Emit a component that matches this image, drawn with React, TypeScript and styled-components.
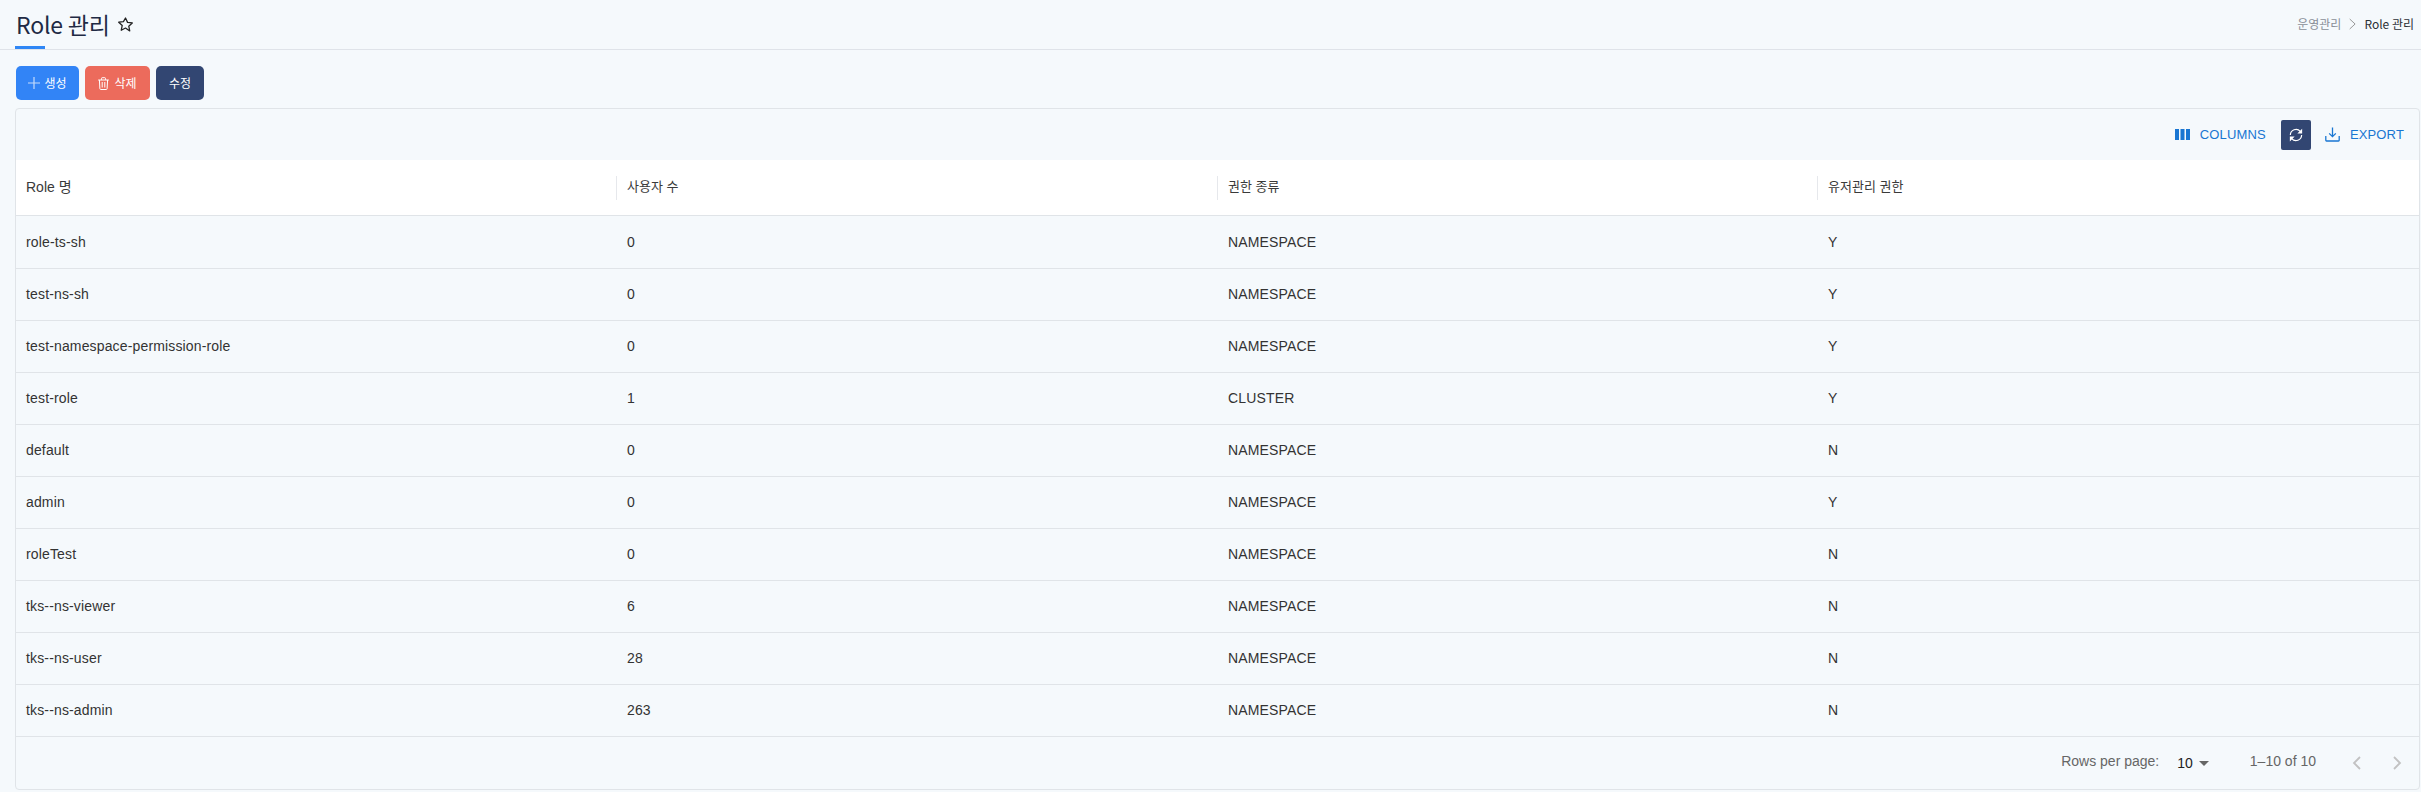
import React from "react";
import styled, { createGlobalStyle } from "styled-components";

const Global = createGlobalStyle`
  html, body { margin: 0; padding: 0; background: #f5f9fc; }
  body { font-family: "Liberation Sans", "Noto Sans CJK KR", sans-serif; }
  * { box-sizing: border-box; }
`;
const Page = styled.div`width: 2421px; height: 792px; overflow: hidden; background: #f5f9fc;`;
const Header = styled.header`
  height: 50px; border-bottom: 1px solid #dfe3e9; display: flex; align-items: flex-start;
  justify-content: space-between; padding: 0 2px 0 16px;
`;
const TitleWrap = styled.div`
  position: relative; height: 49px; display: flex; align-items: center; gap: 7px; padding-bottom: 1px;
  &::after { content: ""; position: absolute; left: -1px; bottom: 0; width: 30px; height: 3px; background: #2e86f5; }
`;
const Title = styled.h1`
  margin: 0; font: 400 23px/32px "Noto Sans CJK KR", sans-serif; color: #1f2a44; letter-spacing: -0.2px;
`;
const Crumbs = styled.nav`
  height: 48px; display: flex; align-items: center; gap: 8px; padding-right: 5px;
  font: 400 12px/16px "Noto Sans CJK KR", sans-serif;
`;
const Crumb = styled.span<{ $active?: boolean }>`color: ${p => (p.$active ? "#2b2f36" : "#8a8f98")};`;
const Actions = styled.div`display: flex; gap: 6px; padding: 16px 0 8px 16px;`;
const Btn = styled.button<{ $bg: string; $w: number; $gap?: number }>`
  width: ${p => p.$w}px; height: 34px; border: 0; border-radius: 5px; background: ${p => p.$bg}; color: #fff;
  font: 400 12px/16px "Noto Sans CJK KR", sans-serif; display: flex; align-items: center; justify-content: center; gap: ${p => p.$gap ?? 4}px; padding: 0;
`;
const Card = styled.section`
  margin-left: 15px; width: 2405px; height: 682px; border: 1px solid #e0e4e8; border-radius: 4px; display: flex; flex-direction: column; overflow: hidden;
`;
const Toolbar = styled.div`
  height: 51px; flex: none; display: flex; align-items: center; justify-content: flex-end; padding: 0 15px 0 0;
`;
const ToolText = styled.button`
  border: 0; background: none; color: #1976d2; font: 400 13px/16px "Liberation Sans", sans-serif; letter-spacing: 0.15px;
  display: flex; align-items: center; gap: 10px; padding: 0;
`;
const Refresh = styled.button`
  width: 30px; height: 30px; border: 0; border-radius: 2px; background: #324672; margin: 0 14px 0 15px; padding: 0;
  display: flex; align-items: center; justify-content: center;
`;
const Grid = styled.div`display: grid; grid-template-columns: 600px 601px 600px 1fr; align-items: center;`;
const HeadRow = styled(Grid)`height: 56px; margin-bottom: 1px; background: #fff; border-bottom: 1px solid #e0e4e8; flex: none;`;
const HeadCell = styled.div<{ $sep?: boolean }>`
  height: 24px; display: flex; align-items: center; padding: 0 0 2px 10px;
  font: 400 ${p => (p.$sep ? "13px" : "14px")}/16px "Liberation Sans", "Noto Sans CJK KR", sans-serif; color: #3a3a3a;
  border-left: ${p => (p.$sep ? "1px solid #e6e8ec" : "0")};
`;
const Row = styled(Grid)`height: 52px; flex: none; border-bottom: 1px solid #e0e4e8;`;
const Cell = styled.div<{ $first?: boolean }>`
  padding: 0 0 2px ${p => (p.$first ? "10px" : "11px")};
  font: 400 14px/18px "Liberation Sans", sans-serif; letter-spacing: 0.15px; color: #333;
`;
const Footer = styled.footer`
  flex: 1; display: flex; align-items: center; justify-content: flex-end; padding-right: 10px; font: 400 14px/20px "Liberation Sans", sans-serif; color: #666;
`;
const FootText = styled.span`position: relative; top: -2px;`;
const PerPage = styled.span`display: flex; align-items: center; gap: 6px; margin: 0 41px 0 18px; color: #222;`;
const Pager = styled.span`display: flex; gap: 16px; margin-left: 29px;`;

const Star = () => (
  <svg width="17" height="17" viewBox="0 0 24 24" fill="none" stroke="#222" strokeWidth="1.8" strokeLinejoin="round">
    <path d="M12 2.8l2.9 6.2 6.7.8-5 4.6 1.4 6.7L12 17l-6 3.1 1.4-6.7-5-4.6 6.7-.8z" />
  </svg>
);
const Plus = () => (
  <svg width="12" height="12" viewBox="0 0 12 12" stroke="#c5dbfb" strokeWidth="1.2"><path d="M6 0v12M0 6h12" /></svg>
);
const Trash = () => (
  <svg width="11" height="13" viewBox="0 0 11 13" fill="none" stroke="#fff" strokeWidth="1">
    <path d="M.2 3h10.6M1.4 3l.5 8.8c0 .4.4.7.8.7h5.6c.4 0 .8-.3.8-.7L9.6 3M3.5 2.8V1.4c0-.4.3-.7.7-.7h2.6c.4 0 .7.3.7.7v1.4M4.2 5v5.5M6.8 5v5.5" />
  </svg>
);
const ColumnsIcon = () => (
  <svg width="15" height="11" viewBox="0 0 15 11" fill="#1976d2"><rect width="4" height="11" /><rect x="5.5" width="4" height="11" /><rect x="11" width="4" height="11" /></svg>
);
const Sync = () => (
  <svg width="18" height="18" viewBox="0 0 24 24">
    <path d="M4.5 12a7.5 7.5 0 0 1 13.2-4.8M19.5 12a7.5 7.5 0 0 1-13.2 4.8" fill="none" stroke="#fff" strokeWidth="1.6" />
    <path d="M20.2 3.5v6.4h-6.4zM3.8 20.5v-6.4h6.4z" fill="#fff" />
  </svg>
);
const Download = () => (
  <svg width="15" height="15" viewBox="0 0 15 15" fill="none" stroke="#1976d2" strokeWidth="1.3">
    <path d="M7.5 .5v9M4.2 6.4l3.3 3.3 3.3-3.3M.8 9v4.3c0 .4.3.7.7.7h12c.4 0 .7-.3.7-.7V9" />
  </svg>
);
const Caret = () => (
  <svg width="10" height="5" viewBox="0 0 10 5" fill="#666"><path d="M0 0h10L5 5z" /></svg>
);
const Chev = ({ d }: { d: string }) => (
  <svg width="24" height="24" viewBox="0 0 24 24" fill="none" stroke="#c2c2c2" strokeWidth="1.8"><path d={d} /></svg>
);

const rows = [
  ["role-ts-sh", "0", "NAMESPACE", "Y"],
  ["test-ns-sh", "0", "NAMESPACE", "Y"],
  ["test-namespace-permission-role", "0", "NAMESPACE", "Y"],
  ["test-role", "1", "CLUSTER", "Y"],
  ["default", "0", "NAMESPACE", "N"],
  ["admin", "0", "NAMESPACE", "Y"],
  ["roleTest", "0", "NAMESPACE", "N"],
  ["tks--ns-viewer", "6", "NAMESPACE", "N"],
  ["tks--ns-user", "28", "NAMESPACE", "N"],
  ["tks--ns-admin", "263", "NAMESPACE", "N"],
];

export default function App() {
  return (
    <Page>
      <Global />
      <Header>
        <TitleWrap>
          <Title>Role 관리</Title>
          <Star />
        </TitleWrap>
        <Crumbs>
          <Crumb>운영관리</Crumb>
          <svg width="7" height="12" viewBox="0 0 7 12" fill="none" stroke="#999" strokeWidth="1"><path d="M.7 1l5.4 5-5.4 5" /></svg>
          <Crumb $active>Role 관리</Crumb>
        </Crumbs>
      </Header>
      <Actions>
        <Btn $bg="#3284f6" $w={63}><Plus />생성</Btn>
        <Btn $bg="#ec6b5c" $w={65} $gap={5}><Trash />삭제</Btn>
        <Btn $bg="#324672" $w={48}>수정</Btn>
      </Actions>
      <Card>
        <Toolbar>
          <ToolText><ColumnsIcon />COLUMNS</ToolText>
          <Refresh aria-label="refresh"><Sync /></Refresh>
          <ToolText><Download />EXPORT</ToolText>
        </Toolbar>
        <HeadRow>
          <HeadCell>Role 명</HeadCell>
          <HeadCell $sep>사용자 수</HeadCell>
          <HeadCell $sep>권한 종류</HeadCell>
          <HeadCell $sep>유저관리 권한</HeadCell>
        </HeadRow>
        {rows.map(r => (
          <Row key={r[0]}>
            {r.map((c, i) => <Cell key={i} $first={i === 0}>{c}</Cell>)}
          </Row>
        ))}
        <Footer>
          <FootText>Rows per page:</FootText>
          <PerPage>10 <Caret /></PerPage>
          <FootText>1–10 of 10</FootText>
          <Pager>
            <Chev d="M15 6l-6 6 6 6" />
            <Chev d="M9 6l6 6-6 6" />
          </Pager>
        </Footer>
      </Card>
    </Page>
  );
}
